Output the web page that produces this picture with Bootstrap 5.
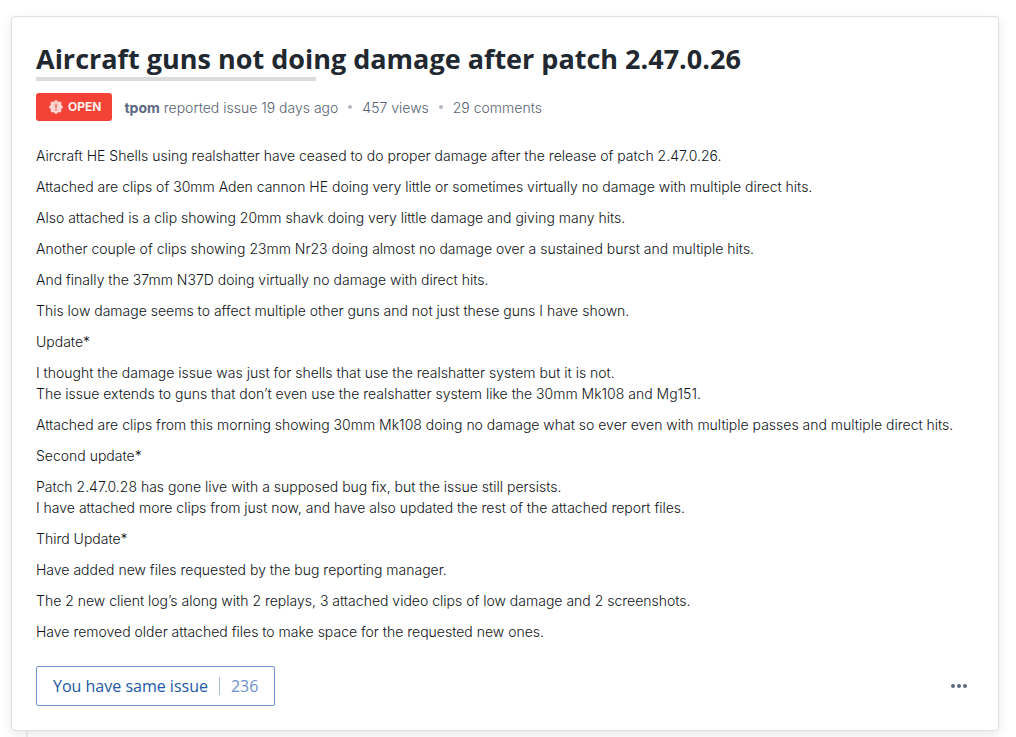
<!DOCTYPE html>
<html lang="en">
<head>
<meta charset="utf-8">
<meta name="viewport" content="width=device-width, initial-scale=1">
<title>Aircraft guns not doing damage after patch 2.47.0.26</title>
<link href="https://cdn.jsdelivr.net/npm/bootstrap@5.3.0/dist/css/bootstrap.min.css" rel="stylesheet">
<style>
body { font-family: Inter, "Liberation Sans", sans-serif; font-size: 14px; font-weight: 300; line-height: 21px; color: #101418; background: #fff; }
.issue-page { padding: 16px 17px 0 11px; min-height: 100vh; }
.issue-card { border: 1px solid #dfdfdf; border-radius: 4px; box-shadow: 0 4px 12px rgba(0,0,0,.09); }
.next-panel { margin-left: 15px; min-height: 6px; border-left: 2px solid #f0f0f0; }
.issue-title { font-family: "Open Sans", "Noto Sans", sans-serif; font-weight: 700; font-size: 27px; line-height: 36px; color: #212830; }
.title-rule { width: 280px; height: 4px; background: #dbdbdb; }
.issue-meta { color: #596273; margin-top: 12px; }
.issue-author { color: #5d6980; font-weight: 700; text-decoration: none; }
.status-badge { background: #f44336; height: 28px; padding: 0 11px 0 13px; border-radius: 3px; font-size: 12px; font-weight: 700; line-height: 16px; color: #fff0ef; gap: 5px; }
.meta-dot { width: 4px; height: 4px; margin: 0 10px; border-radius: 50%; background: #b3b8c2; }
.issue-body p { margin: 0 0 10px; }
.btn-same { height: 40px; padding: 0 16px; border: 1px solid #7197cf; border-radius: 2px; background: #fff; color: #2258a5; font-family: "Open Sans", sans-serif; font-size: 16px; line-height: 24px; }
.btn-same:hover { border-color: #2258a5; color: #2258a5; }
.same-count { border-left: 1px solid #a3bddf; color: #6c91ca; line-height: 18px; margin-left: 11px; padding-left: 11px; }
.btn-more { height: 32px; width: 30px; color: #5d6980; }
</style>
</head>
<body>
<main class="issue-page">
<article class="issue-card position-relative bg-white p-4">
<header>
<h1 class="issue-title mb-0">Aircraft guns not doing damage after patch 2.47.0.26</h1>
<div class="title-rule"></div>
<div class="issue-meta d-flex align-items-center">
<span class="status-badge d-flex align-items-center me-2">
<svg width="14" height="14" viewBox="0 0 14 14" aria-hidden="true"><g fill="#ffd3cf"><circle cx="7" cy="7" r="5.800"/><circle cx="7" cy="1.800" r="1.700"/><circle cx="10.700" cy="3.300" r="1.700"/><circle cx="12.200" cy="7" r="1.700"/><circle cx="10.700" cy="10.700" r="1.700"/><circle cx="7" cy="12.200" r="1.700"/><circle cx="3.300" cy="10.700" r="1.700"/><circle cx="1.800" cy="7" r="1.700"/><circle cx="3.300" cy="3.300" r="1.700"/></g><path fill="#f4665c" d="M6.200 3.500h1.600v4.500H6.200zM6.200 9h1.600v1.600H6.200z"/></svg>
<span>OPEN</span></span>
<span class="ms-1"><a class="issue-author" href="#">tpom</a> reported issue 19 days ago</span>
<span class="meta-dot"></span><span>457 views</span>
<span class="meta-dot"></span><span>29 comments</span>
</div>
</header>
<section class="issue-body pt-4">
<p>Aircraft HE Shells using realshatter have ceased to do proper damage after the release of patch 2.47.0.26.</p>
<p>Attached are clips of 30mm Aden cannon HE doing very little or sometimes virtually no damage with multiple direct hits.</p>
<p>Also attached is a clip showing 20mm shavk doing very little damage and giving many hits.</p>
<p>Another couple of clips showing 23mm Nr23 doing almost no damage over a sustained burst and multiple hits.</p>
<p>And finally the 37mm N37D doing virtually no damage with direct hits.</p>
<p>This low damage seems to affect multiple other guns and not just these guns I have shown.</p>
<p>Update*</p>
<p>I thought the damage issue was just for shells that use the realshatter system but it is not.<br>The issue extends to guns that don’t even use the realshatter system like the 30mm Mk108 and Mg151.</p>
<p>Attached are clips from this morning showing 30mm Mk108 doing no damage what so ever even with multiple passes and multiple direct hits.</p>
<p>Second update*</p>
<p>Patch 2.47.0.28 has gone live with a supposed bug fix, but the issue still persists.<br>I have attached more clips from just now, and have also updated the rest of the attached report files.</p>
<p>Third Update*</p>
<p>Have added new files requested by the bug reporting manager.</p>
<p>The 2 new client log’s along with 2 replays, 3 attached video clips of low damage and 2 screenshots.</p>
<p class="mb-4">Have removed older attached files to make space for the requested new ones.</p>
</section>
<footer class="d-flex align-items-center justify-content-between">
<button type="button" class="btn btn-same d-flex align-items-center"><span>You have same issue</span><span class="same-count">236</span></button>
<button type="button" class="btn btn-more p-0 d-flex align-items-center justify-content-center" aria-label="More actions"><svg width="16" height="4" viewBox="0 0 16 4" fill="currentColor"><circle cx="2" cy="2" r="2"/><circle cx="8" cy="2" r="2"/><circle cx="14" cy="2" r="2"/></svg></button>
</footer>
</article>
<section class="next-panel"></section>
</main>
<script src="https://cdn.jsdelivr.net/npm/bootstrap@5.3.0/dist/js/bootstrap.bundle.min.js"></script>
</body>
</html>
